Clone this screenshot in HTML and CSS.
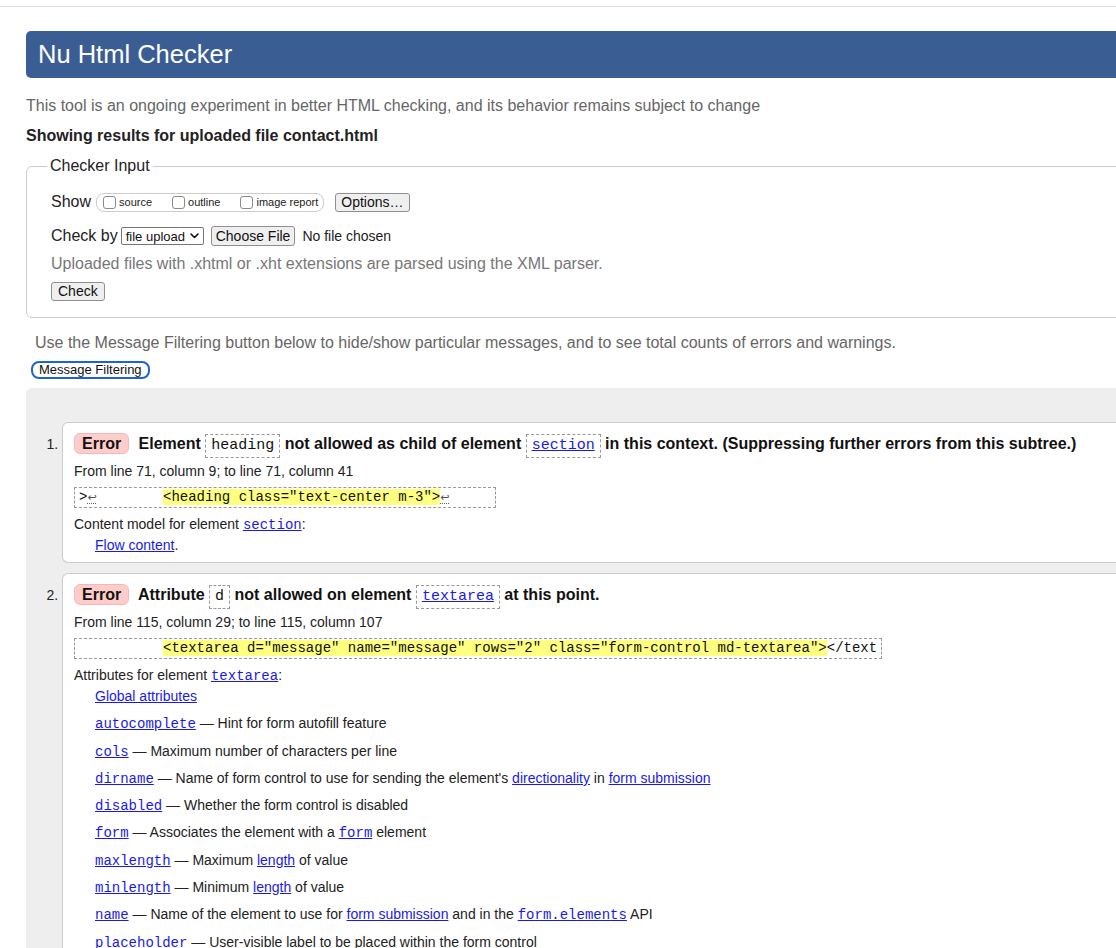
FILE: index.html
```html
<!DOCTYPE html>
<html lang="en">
<head>
<meta charset="utf-8">
<title>Showing results for contact.html - Nu Html Checker</title>
<link rel="stylesheet" href="styles.css">
</head>
<body>
<div class="topline"></div>
<div class="page">
  <h1 class="title">Nu Html Checker</h1>
  <p class="intro">This tool is an ongoing experiment in better HTML checking, and its behavior remains subject to change</p>
  <p class="showing">Showing results for uploaded file contact.html</p>

  <fieldset class="input">
    <legend>Checker Input</legend>
    <div class="row row-show">
      <span class="lbl">Show</span>
      <span class="cbgroup">
        <label class="cb"><input type="checkbox">source</label>
        <label class="cb"><input type="checkbox">outline</label>
        <label class="cb"><input type="checkbox">image report</label>
      </span>
      <button class="btn btn-options" type="button">Options…</button>
    </div>
    <div class="row row-by">
      <span class="lbl">Check by</span>
      <span class="selectbox">file upload<svg class="chev" width="9" height="6" viewBox="0 0 9 6"><path d="M1 1l3.5 3.5L8 1" fill="none" stroke="#111" stroke-width="1.6" stroke-linecap="round" stroke-linejoin="round"/></svg></span>
      <button class="btn btn-file" type="button">Choose File</button>
      <span class="nofile">No file chosen</span>
    </div>
    <p class="hint">Uploaded files with .xhtml or .xht extensions are parsed using the XML parser.</p>
    <div class="row row-check"><button class="btn btn-check" type="button">Check</button></div>
  </fieldset>

  <p class="filterinfo">Use the Message Filtering button below to hide/show particular messages, and to see total counts of errors and warnings.</p>
  <button class="filterbtn" type="button">Message Filtering</button>

  <div class="results">
    <ol class="messages">
      <li class="msgitem">
        <p class="msg"><span class="badge">Error</span> Element <code class="nm">heading</code> not allowed as child of element <a href="#" class="nm-link"><code class="nm">section</code></a> in this context. (Suppressing further errors from this subtree.)</p>
        <p class="loc">From line 71, column 9; to line 71, column 41</p>
        <p class="extract">&gt;<span class="lf">↩</span>        <mark>&lt;heading class="text-center m-3"&gt;</mark><span class="lf">↩</span>     </p>
        <p class="model">Content model for element <a href="#" class="cl">section</a>:</p>
        <div class="attrs">
          <p class="attr first"><a href="#">Flow content</a>.</p>
        </div>
      </li>
      <li class="msgitem">
        <p class="msg"><span class="badge">Error</span> Attribute <code class="nm">d</code> not allowed on element <a href="#" class="nm-link"><code class="nm">textarea</code></a> at this point.</p>
        <p class="loc">From line 115, column 29; to line 115, column 107</p>
        <p class="extract">          <mark>&lt;textarea d="message" name="message" rows="2" class="form-control md-textarea"&gt;</mark>&lt;/text</p>
        <p class="model">Attributes for element <a href="#" class="cl">textarea</a>:</p>
        <div class="attrs">
          <p class="attr first"><a href="#">Global attributes</a></p>
          <p class="attr"><a href="#" class="cl">autocomplete</a> — Hint for form autofill feature</p>
          <p class="attr"><a href="#" class="cl">cols</a> — Maximum number of characters per line</p>
          <p class="attr"><a href="#" class="cl">dirname</a> — Name of form control to use for sending the element's <a href="#">directionality</a> in <a href="#">form submission</a></p>
          <p class="attr"><a href="#" class="cl">disabled</a> — Whether the form control is disabled</p>
          <p class="attr"><a href="#" class="cl">form</a> — Associates the element with a <a href="#" class="cl">form</a> element</p>
          <p class="attr"><a href="#" class="cl">maxlength</a> — Maximum <a href="#">length</a> of value</p>
          <p class="attr"><a href="#" class="cl">minlength</a> — Minimum <a href="#">length</a> of value</p>
          <p class="attr"><a href="#" class="cl">name</a> — Name of the element to use for <a href="#">form submission</a> and in the <a href="#" class="cl">form.elements</a> API</p>
          <p class="attr"><a href="#" class="cl">placeholder</a> — User-visible label to be placed within the form control</p>
        </div>
      </li>
    </ol>
  </div>
</div>
</body>
</html>
```
FILE: styles.css
```css
html {
  overflow: hidden;
}
body {
  margin: 0;
  font-family: "Liberation Sans", Arial, sans-serif;
  color: #222;
  background: #fff;
}
.topline {
  height: 6px;
  border-bottom: 1px solid #ddd;
}
.page {
  margin: 0 -60px 0 26px;
}
.title {
  margin: 24px 0 0;
  height: 47px;
  line-height: 47px;
  padding-left: 12px;
  background: #3a5e93;
  color: #fff;
  font-size: 25.5px;
  font-weight: normal;
  border-radius: 5px 0 0 5px;
}
.intro {
  margin: 18px 0 0;
  font-size: 16px;
  line-height: 20px;
  color: #666;
}
.showing {
  margin: 10px 0 0;
  font-size: 16px;
  line-height: 20px;
  font-weight: bold;
  color: #222;
}
.input {
  margin: 10px 0 0;
  padding: 0 24px 16px;
  border: 1px solid #ccc;
  border-radius: 6px 0 0 6px;
  min-width: 0;
}
.input legend {
  font-size: 16px;
  line-height: 20px;
  padding: 0 3px;
  margin-left: -4px;
  color: #222;
}
.row {
  display: flex;
  align-items: center;
  height: 20px;
}
.row-show {
  margin-top: 16px;
}
.row-by {
  margin-top: 14px;
}
.row-check {
  margin-top: 8px;
  height: 19px;
}
.lbl {
  font-size: 16px;
  line-height: 20px;
  color: #222;
}
.cbgroup {
  display: flex;
  align-items: center;
  height: 17px;
  margin-left: 5px;
  padding: 0 5px 0 6px;
  border: 1px solid #ccc;
  border-radius: 8px;
}
.cb {
  display: flex;
  align-items: center;
  font-size: 11px;
  line-height: 13px;
  color: #222;
  margin-right: 20px;
}
.cb:last-child {
  margin-right: 0;
}
.cb input {
  appearance: none;
  -webkit-appearance: none;
  width: 13px;
  height: 13px;
  margin: 0 3px 0 0;
  border: 1px solid #8a8a8a;
  border-radius: 3px;
  background: #fff;
}
.btn {
  font-family: "Liberation Sans", Arial, sans-serif;
  font-size: 14px;
  line-height: 17px;
  height: 19px;
  padding: 0 5px;
  border: 1px solid #8f8f8f;
  border-radius: 3px;
  background: #efefef;
  color: #111;
}
.btn-options {
  margin-left: 11px;
}
.btn-file {
  margin-left: 7px;
  padding: 0 4px;
  height: 20px;
}
.btn-check {
  padding: 0 6px;
}
.selectbox {
  display: flex;
  align-items: center;
  justify-content: space-between;
  box-sizing: border-box;
  width: 83px;
  height: 18px;
  margin-left: 3px;
  padding: 0 4px 0 4px;
  border: 1px solid #767676;
  border-radius: 2px;
  font-size: 13px;
  color: #111;
}
.chev {
  display: block;
}
.nofile {
  margin-left: 7px;
  font-size: 14px;
  color: #222;
}
.hint {
  margin: 8px 0 0;
  font-size: 16px;
  line-height: 20px;
  color: #777;
}
.filterinfo {
  margin: 15px 0 0;
  padding-left: 9px;
  font-size: 16px;
  line-height: 20px;
  color: #666;
}
.filterbtn {
  display: block;
  margin: 8px 0 0 5px;
  height: 18px;
  padding: 0 6px;
  font-family: "Liberation Sans", Arial, sans-serif;
  font-size: 13px;
  line-height: 14px;
  color: #111;
  background: #fff;
  border: 2px solid #1b64d1;
  border-radius: 8px;
}
.results {
  margin-top: 9px;
  padding: 34px 0 1px;
  background: #eee;
  border-radius: 6px 0 0 0;
}
.messages {
  margin: 0;
  padding-left: 36px;
  font-size: 14px;
  color: #222;
}
.msgitem {
  background: #fff;
  border: 1px solid #ccc;
  border-right: 0;
  border-radius: 6px 0 0 6px;
  padding: 8px 0 8px 11px;
  margin-bottom: 10px;
}
.msg {
  margin: 0;
  height: 26px;
  font-size: 16px;
  line-height: 26px;
  font-weight: bold;
  color: #111;
}
.badge {
  display: inline-block;
  padding: 0 7px;
  line-height: 19px;
  background: #fcc;
  border: 1px solid #f3b9b9;
  border-radius: 6px;
  margin-right: 5px;
}
code.nm {
  display: inline-block;
  font-family: "Liberation Mono", "Courier New", monospace;
  font-size: 15px;
  font-weight: normal;
  line-height: 20px;
  padding: 1px 5px;
  border: 1px dashed #999;
  color: #111;
}
a {
  color: #1a1ae6;
  text-decoration: underline;
}
a.nm-link {
  text-decoration: none;
}
a.nm-link code.nm {
  color: #1a1ae6;
  text-decoration: underline;
}
.cl {
  font-family: "Liberation Mono", "Courier New", monospace;
  font-size: 14px;
  line-height: 1;
}
.loc {
  margin: 5px 0 0;
  height: 18px;
  font-size: 14px;
  line-height: 18px;
}
.extract {
  width: fit-content;
  margin: 7px 0 0;
  padding: 0 4px;
  border: 1px dashed #999;
  font-family: "Liberation Mono", "Courier New", monospace;
  font-size: 14px;
  line-height: 19px;
  height: 19px;
  white-space: pre;
  color: #111;
}
.extract mark {
  background: #ffff80;
  color: #111;
}
.lf {
  display: inline-block;
  width: 8.4px;
  font-family: "DejaVu Sans", sans-serif;
  font-size: 11px;
  line-height: 10px;
  color: #555;
  border-bottom: 1px dotted #666;
}
.model {
  margin: 7px 0 0;
  height: 18px;
  font-size: 14px;
  line-height: 18px;
}
.attrs {
  margin-left: 21px;
}
.attr {
  margin: 9.3px 0 0;
  height: 18px;
  font-size: 14px;
  line-height: 18px;
  white-space: nowrap;
}
.attr.first {
  margin-top: 3px;
}
```
